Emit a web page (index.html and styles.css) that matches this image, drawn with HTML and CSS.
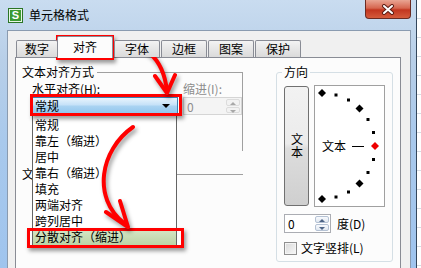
FILE: index.html
```html
<!DOCTYPE html>
<html lang="zh-CN">
<head>
<meta charset="UTF-8">
<meta name="viewport" content="width=device-width, initial-scale=1.0">
<title>单元格格式</title>
<link rel="stylesheet" href="styles.css">
</head>
<body>
<div class="win">
    <div class="titlebar">
        <span class="logo">S</span>
        <span class="title">单元格格式</span>
        <span class="close">
            <svg width="14" height="11" viewBox="0 0 14 11">
                <path class="x-out" d="M3 2 L11 9 M11 2 L3 9"/>
                <path class="x-in" d="M3 2 L11 9 M11 2 L3 9"/>
            </svg>
        </span>
    </div>
    <div class="client">
        <ul class="tabs">
            <li>数字</li>
            <li class="on">对齐</li>
            <li>字体</li>
            <li>边框</li>
            <li>图案</li>
            <li>保护</li>
        </ul>
        <div class="panel">
            <div class="col">
                <fieldset class="grp align">
                    <legend>文本对齐方式</legend>
                    <div class="fields">
                        <label>水平对齐(H):</label>
                        <label class="dis">缩进(I):</label>
                        <div class="combo">常规<i class="caret"></i></div>
                        <div class="spin dis"><span>0</span><b class="btns"><i class="up"></i><i class="dn"></i></b></div>
                    </div>
                </fieldset>
                <fieldset class="grp ctrl">
                    <legend>文本控制</legend>
                </fieldset>
            </div>
            <fieldset class="dir">
                <legend>方向</legend>
                <div class="dir-top">
                    <div class="vbtn">文本</div>
                    <div class="preview">
                        <svg width="69" height="120" viewBox="0 0 69 120">
                            <polygon points="7,3 11,7 7,11 3,7"/>
                            <rect x="19.5" y="7.5" width="3" height="3"/>
                            <rect x="32" y="12.5" width="3" height="3"/>
                            <polygon points="44.5,18.5 48.5,22.5 44.5,26.5 40.5,22.5"/>
                            <rect x="51.5" y="32" width="3" height="3"/>
                            <rect x="57" y="45" width="3" height="3"/>
                            <polygon class="red" points="60,56 64,60 60,64 56,60"/>
                            <rect x="57" y="72" width="3" height="3"/>
                            <rect x="51.5" y="85" width="3" height="3"/>
                            <polygon points="44.5,93.5 48.5,97.5 44.5,101.5 40.5,97.5"/>
                            <rect x="32" y="104.5" width="3" height="3"/>
                            <rect x="19.5" y="109.5" width="3" height="3"/>
                            <polygon points="7,109 11,113 7,117 3,113"/>
                            <text x="7" y="64.5">文本</text>
                            <line x1="37" y1="60.5" x2="49" y2="60.5"/>
                        </svg>
                    </div>
                </div>
                <div class="deg">
                    <div class="spin"><span>0</span><b class="btns"><i class="up"></i><i class="dn"></i></b></div>
                    <span>度(D)</span>
                </div>
                <label class="chk"><i class="box"></i>文字竖排(L)</label>
            </fieldset>
        </div>
    </div>

    <ul class="droplist">
        <li>常规</li>
        <li>靠左（缩进）</li>
        <li>居中</li>
        <li>靠右（缩进）</li>
        <li>填充</li>
        <li>两端对齐</li>
        <li>跨列居中</li>
        <li class="hl">分散对齐（缩进）</li>
    </ul>

    <div class="mark mark-tab"></div>
    <div class="mark mark-combo"></div>
    <div class="mark mark-item"></div>

    <svg class="arrows" width="421" height="268" viewBox="0 0 421 268">
        <path d="M117 45 C 142 41, 163 56, 167 91"/>
        <polyline points="155,76 167,93 175,75"/>
        <path d="M133 127 C 100 150, 92 198, 124 223"/>
        <polyline points="106,212 128,227 120,201"/>
    </svg>
</div>
</body>
</html>
```

FILE: styles.css
```css
html, body {
    margin: 0;
    padding: 0;
}
body {
    width: 421px;
    height: 268px;
    overflow: hidden;
    font: 12px/16px "Noto Sans CJK SC", "Liberation Sans", sans-serif;
    color: #000;
    background: repeating-linear-gradient(#fff 0 18px, #d6dbe3 18px 19px);
}
.win {
    position: relative;
    width: 417px;
    height: 268px;
    box-sizing: border-box;
    padding: 0 5px 0 7px;
    border-right: 1px solid #34475c;
    background: linear-gradient(180deg, #c9dcf0 0, #b8cfe8 60px, #a9c9ec 140px, #9fc4ee 268px);
    display: flex;
    flex-direction: column;
}

/* title bar */
.titlebar {
    height: 30px;
    display: flex;
    align-items: center;
    flex-shrink: 0;
}
.logo {
    width: 15px;
    height: 15px;
    margin-left: 1px;
    box-sizing: border-box;
    background: #3c9a33;
    border: 1px solid #2c7526;
    box-shadow: inset 0 0 0 1px #e9f5e6;
    color: #fff;
    font: bold 11px/13px "Liberation Sans", sans-serif;
    text-align: center;
}
.title {
    margin-left: 6px;
    font-size: 12px;
}
.close {
    margin-left: auto;
    align-self: flex-start;
    width: 46px;
    height: 19px;
    box-sizing: border-box;
    border: 1px solid #6b2b22;
    border-top: none;
    border-radius: 0 0 4px 4px;
    background: linear-gradient(#e9a593 0, #d6664f 45%, #c2361f 55%, #d45b3c 100%);
    display: flex;
    align-items: center;
    justify-content: center;
}
.close .x-out { stroke: #5c1d14; stroke-width: 4; stroke-linecap: round; fill: none; }
.close .x-in { stroke: #fff; stroke-width: 2; stroke-linecap: round; fill: none; }

/* client area */
.client {
    flex: 1;
    display: flex;
    flex-direction: column;
    background: #f0f0f0;
    border: 1px solid #8a9bb0;
    border-bottom: none;
    padding: 6px 9px 0 7px;
    min-height: 0;
}
.tabs {
    list-style: none;
    margin: 0 0 0 1px;
    padding: 0;
    height: 20px;
    display: flex;
    align-items: flex-end;
    position: relative;
    z-index: 1;
}
.tabs li {
    height: 16px;
    line-height: 16px;
    padding: 0 10px;
    margin-left: 1px;
    border: 1px solid #898c95;
    border-bottom: none;
    border-radius: 2px 2px 0 0;
    background: linear-gradient(#f3f3f3, #e6e6e6 50%, #dadada);
}
.tabs li:first-child {
    padding: 0 8px;
    margin-left: 0;
}
.tabs li.on {
    height: 21px;
    line-height: 20px;
    padding: 0 15px;
    margin-left: -1px;
    margin-bottom: -1px;
    background: #fcfcfc;
}
.panel {
    flex: 1;
    display: flex;
    align-items: flex-start;
    background: #fcfcfc;
    border: 1px solid #898c95;
    border-bottom: none;
    padding: 0 6px;
}

/* left column groups */
.grp {
    margin: 0;
    padding: 0;
    border: none;
    border-top: 1px solid #a0a0a0;
    min-width: 0;
    box-sizing: border-box;
    width: 221px;
}
.grp legend {
    padding: 0 3px 0 0;
    line-height: 16px;
}
.align {
    margin-top: 6px;
    border-right: 1px solid #a0a0a0;
    padding: 1px 0 36px 10px;
}
.align legend {
    margin-left: -10px;
}
.ctrl {
    margin-top: 15px;
    height: 40px;
}
/* the open list covers the rest of this label */
.ctrl legend {
    width: 10px;
    overflow: hidden;
    white-space: nowrap;
}
.fields {
    display: grid;
    grid-template-columns: 146px 59px;
    column-gap: 5px;
    align-items: start;
}
.dis { color: #8d8d8d; }
.combo {
    height: 17px;
    box-sizing: border-box;
    border: 1px solid #3c7fb1;
    background: linear-gradient(#e8f4fd 0, #c6e2f8 45%, #a9d3f2 55%, #92c6ee 100%);
    padding-left: 2px;
    line-height: 15px;
    display: flex;
    align-items: center;
}
.caret {
    margin-left: auto;
    margin-right: 7px;
    width: 0;
    height: 0;
    border-left: 4px solid transparent;
    border-right: 4px solid transparent;
    border-top: 4px solid #000;
}

/* spin boxes */
.spin {
    display: flex;
    height: 19px;
    box-sizing: border-box;
    border: 1px solid #abadb3;
    background: #fff;
}
.spin span {
    padding-left: 3px;
    line-height: 17px;
}
.spin.dis {
    height: 18px;
    background: #f4f4f4;
    border-color: #d5d5d5;
}
.btns {
    margin: 1px 1px 1px auto;
    width: 14px;
    display: flex;
    flex-direction: column;
    gap: 1px;
}
.btns i {
    flex: 1;
    border: 1px solid #b5c2d4;
    border-radius: 2px;
    background: linear-gradient(#f8fafd, #e1e8f1);
    position: relative;
}
.btns i::after {
    content: "";
    position: absolute;
    left: 3px;
    top: 2px;
    border-left: 3px solid transparent;
    border-right: 3px solid transparent;
}
.btns .up::after { border-bottom: 3px solid #4e6587; }
.btns .dn::after { border-top: 3px solid #4e6587; }
.spin.dis .btns i { border-color: #dcdcdc; background: #f2f2f2; }
.spin.dis .btns .up::after { border-bottom-color: #a8a8a8; }
.spin.dis .btns .dn::after { border-top-color: #a8a8a8; }

/* direction group */
.dir {
    margin: 6px 0 0 33px;
    width: 117px;
    box-sizing: border-box;
    border: 1px solid #d5dfe5;
    border-radius: 3px;
    padding: 5px 7px 5px 7px;
    min-width: 0;
}
.dir legend {
    padding: 0 2px;
    margin-left: -2px;
    line-height: 16px;
}
.dir-top {
    display: flex;
    gap: 5px;
    align-items: flex-start;
}
.vbtn {
    width: 25px;
    height: 120px;
    margin-top: 1px;
    box-sizing: border-box;
    border: 1px solid #707070;
    border-radius: 3px;
    background: linear-gradient(#f2f2f2 0, #ebebeb 48%, #dddddd 52%, #cfcfcf 100%);
    display: flex;
    align-items: center;
    justify-content: center;
    writing-mode: vertical-rl;
    text-orientation: upright;
    line-height: 14px;
    letter-spacing: 1px;
}
.preview {
    width: 71px;
    height: 122px;
    box-sizing: border-box;
    border: 1px solid #a0a0a0;
    background: #fff;
}
.preview svg { display: block; }
.preview polygon, .preview rect { fill: #000; }
.preview polygon.red { fill: #e00; }
.preview text {
    font: 12px "Noto Sans CJK SC", sans-serif;
    fill: #000;
}
.preview line { stroke: #000; stroke-width: 1; }
.deg {
    margin-top: 7px;
    display: flex;
    align-items: center;
}
.deg .spin { width: 47px; }
.deg > span { margin-left: 6px; }
.chk {
    margin-top: 7px;
    display: flex;
    align-items: center;
    height: 16px;
}
.chk .box {
    width: 13px;
    height: 13px;
    margin-right: 4px;
    box-sizing: border-box;
    border: 1px solid #8f8f8f;
    background: linear-gradient(135deg, #d8d8d8, #f8f8f8);
    box-shadow: inset 0 0 0 1px #f4f4f4;
}

/* open dropdown list */
.droplist {
    position: absolute;
    left: 32px;
    top: 113px;
    width: 145px;
    box-sizing: border-box;
    margin: 0;
    padding: 3px 0 1px;
    list-style: none;
    background: #fff;
    border: 1px solid #646464;
}
.droplist li {
    height: 16px;
    line-height: 16px;
    padding-left: 2px;
}
.droplist li.hl {
    background: linear-gradient(#d6e6c6, #bcd3a5);
}

/* annotations */
.mark {
    position: absolute;
    box-sizing: border-box;
    border: 3px solid #f00;
    box-shadow: 2px 3px 4px rgba(0, 0, 0, .4);
}
.mark-tab { left: 56px; top: 35px; width: 58px; height: 25px; }
.mark-combo { left: 30px; top: 94px; width: 152px; height: 22px; }
.mark-item { left: 27px; top: 228px; width: 157px; height: 20px; }
.arrows {
    position: absolute;
    left: 0;
    top: 0;
    pointer-events: none;
    filter: drop-shadow(2px 3px 2px rgba(0, 0, 0, .4));
}
.arrows path, .arrows polyline {
    fill: none;
    stroke: #f00;
    stroke-width: 4;
    stroke-linecap: round;
    stroke-linejoin: round;
}
```
